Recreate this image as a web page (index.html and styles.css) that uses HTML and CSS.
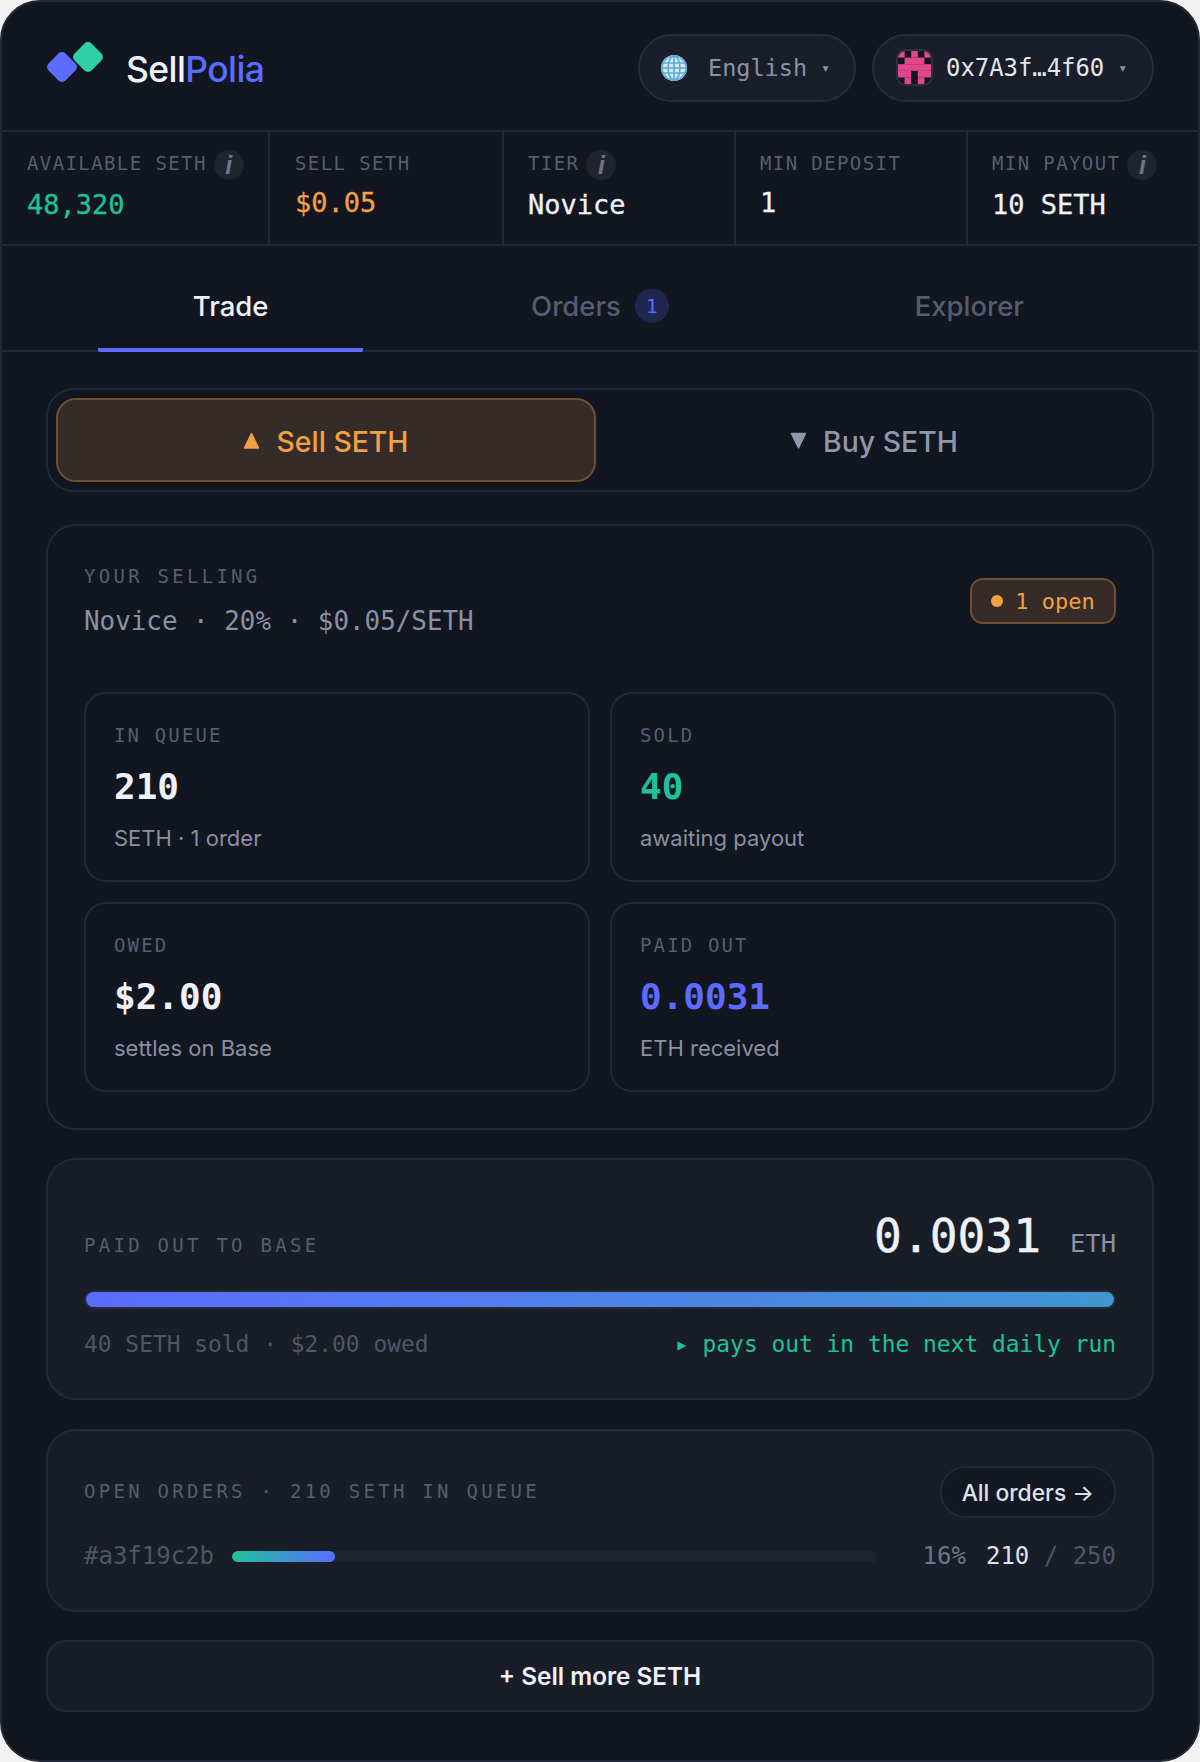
FILE: index.html
```html
<!DOCTYPE html>
<html>
<head>
    <title>SellPolia</title>
    <link rel="stylesheet" href="styles.css">
</head>
<body>
    <div class="shell">
        <header class="topbar">
            <div class="brand">
                <svg class="logo" width="60" height="44" viewBox="0 0 60 44">
                    <rect x="32" y="4" width="24" height="24" rx="5" fill="#30cfa5" transform="rotate(45 44 16)"/>
                    <rect x="6" y="14" width="24" height="24" rx="5" fill="#5b6cff" transform="rotate(45 18 26)"/>
                </svg>
                <span class="brand-name">Sell<em>Polia</em></span>
            </div>
            <div class="top-actions">
                <div class="pill pill-lang">
                    <svg class="globe" width="26" height="26" viewBox="0 0 26 26">
                        <circle cx="13" cy="13" r="13" fill="#dfe3e6"/>
                        <g fill="none" stroke="#52b0d8" stroke-width="1.7">
                            <circle cx="13" cy="13" r="12"/>
                            <ellipse cx="13" cy="13" rx="6" ry="12"/>
                            <path d="M13 1v24M2 8h22M1 13h24M2 18h22"/>
                        </g>
                    </svg>
                    <span class="lang">English</span>
                    <span class="caret">▾</span>
                </div>
                <div class="pill pill-wallet">
                    <svg class="identicon" width="37" height="37" viewBox="0 0 37 37">
                        <clipPath id="idclip"><rect x="2" y="2" width="33" height="33" rx="8"/></clipPath>
                        <rect x="1" y="1" width="35" height="35" rx="9" fill="#121620" stroke="#2a3040" stroke-width="2"/>
                        <g fill="#e2468c" clip-path="url(#idclip)">
                            <rect x="2" y="2" width="6.6" height="6.6"/>
                            <rect x="15.2" y="2" width="6.6" height="6.6"/>
                            <rect x="28.4" y="2" width="6.6" height="6.6"/>
                            <rect x="8.6" y="8.6" width="19.8" height="6.6"/>
                            <rect x="2" y="15.2" width="33" height="6.6"/>
                            <rect x="2" y="21.8" width="13.2" height="6.6"/>
                            <rect x="21.8" y="21.8" width="13.2" height="6.6"/>
                            <rect x="8.6" y="28.4" width="6.6" height="6.6"/>
                            <rect x="21.8" y="28.4" width="6.6" height="6.6"/>
                        </g>
                    </svg>
                    <span class="address">0x7A3f…4f60</span>
                    <span class="caret">▾</span>
                </div>
            </div>
        </header>

        <section class="stats">
            <div class="stat">
                <div class="stat-label">AVAILABLE SETH<i class="info">i</i></div>
                <div class="stat-value green">48,320</div>
            </div>
            <div class="stat">
                <div class="stat-label">SELL SETH</div>
                <div class="stat-value orange">$0.05</div>
            </div>
            <div class="stat">
                <div class="stat-label">TIER<i class="info">i</i></div>
                <div class="stat-value">Novice</div>
            </div>
            <div class="stat">
                <div class="stat-label">MIN DEPOSIT</div>
                <div class="stat-value">1</div>
            </div>
            <div class="stat">
                <div class="stat-label">MIN PAYOUT<i class="info">i</i></div>
                <div class="stat-value">10 SETH</div>
            </div>
        </section>

        <nav class="tabs">
            <div class="tab active">Trade</div>
            <div class="tab">Orders<span class="tab-count">1</span></div>
            <div class="tab">Explorer</div>
        </nav>

        <main class="content">
            <div class="toggle">
                <div class="toggle-btn sell">
                    <svg width="17" height="18" viewBox="0 0 17 18"><path d="M8.5 1.5 L15.5 16 H1.5 Z" fill="#f2a044" stroke="#f2a044" stroke-width="1.5" stroke-linejoin="round"/></svg>
                    Sell SETH
                </div>
                <div class="toggle-btn buy">
                    <svg width="17" height="18" viewBox="0 0 17 18"><path d="M1.5 1.5 H15.5 L8.5 16 Z" fill="#8f98ab" stroke="#8f98ab" stroke-width="1.5" stroke-linejoin="round"/></svg>
                    Buy SETH
                </div>
            </div>

            <section class="card selling">
                <div class="selling-head">
                    <div class="selling-title">
                        <div class="label">YOUR SELLING</div>
                        <div class="selling-sub">Novice · 20% · $0.05/SETH</div>
                    </div>
                    <div class="badge"><span class="dot"></span>1 open</div>
                </div>
                <div class="tiles">
                    <div class="tile">
                        <div class="tile-label">IN QUEUE</div>
                        <div class="tile-value">210</div>
                        <div class="tile-sub">SETH · 1 order</div>
                    </div>
                    <div class="tile">
                        <div class="tile-label">SOLD</div>
                        <div class="tile-value green">40</div>
                        <div class="tile-sub">awaiting payout</div>
                    </div>
                    <div class="tile">
                        <div class="tile-label">OWED</div>
                        <div class="tile-value">$2.00</div>
                        <div class="tile-sub">settles on Base</div>
                    </div>
                    <div class="tile">
                        <div class="tile-label">PAID OUT</div>
                        <div class="tile-value indigo">0.0031</div>
                        <div class="tile-sub">ETH received</div>
                    </div>
                </div>
            </section>

            <section class="card raised payout">
                <div class="payout-head">
                    <div class="label">PAID OUT TO BASE</div>
                    <div class="payout-amount">0.0031<span class="unit">ETH</span></div>
                </div>
                <div class="payout-track"><div class="payout-fill"></div></div>
                <div class="payout-foot">
                    <span>40 SETH sold · $2.00 owed</span>
                    <span class="green">▸ pays out in the next daily run</span>
                </div>
            </section>

            <section class="card raised orders">
                <div class="orders-head">
                    <div class="label">OPEN ORDERS · 210 SETH IN QUEUE</div>
                    <div class="all-orders">All orders →</div>
                </div>
                <div class="order-row">
                    <span class="order-id">#a3f19c2b</span>
                    <div class="order-track"><div class="order-fill" style="width: 16%"></div></div>
                    <span class="order-pct">16%</span>
                    <span class="order-amt"><b>210</b> / 250</span>
                </div>
            </section>

            <div class="sell-more">+ Sell more SETH</div>
        </main>
    </div>
</body>
</html>
```

FILE: styles.css
```css
* { box-sizing: border-box; }
html, body { margin: 0; padding: 0; }
body {
    background: #f2f2f2;
    font-family: Inter, sans-serif;
    color: #eef1f8;
}
.shell {
    width: 1200px;
    height: 1762px;
    border: 2px solid #232938;
    border-radius: 40px;
    background: #121620;
    overflow: hidden;
}
.green { color: #1fc29a; }
.orange { color: #f2a044; }
.indigo { color: #5b6cff; }

/* header */
.topbar {
    height: 128px;
    padding: 3px 44px 0 42px;
    display: flex;
    align-items: center;
    justify-content: space-between;
}
.brand { display: flex; align-items: center; gap: 22px; }
.logo { display: block; margin-top: -9px; }
.brand-name { font-size: 35.5px; font-weight: 500; letter-spacing: -0.6px; margin-top: 3px; }
.brand-name em { font-style: normal; color: #5b6cff; }
.top-actions { display: flex; gap: 16px; }
.pill {
    height: 68px;
    display: flex;
    align-items: center;
    border: 2px solid #272d3b;
    border-radius: 34px;
    background: #191e2a;
    font-family: "DejaVu Sans Mono", monospace;
}
.pill-lang { width: 218px; padding-left: 21px; }
.pill-wallet { width: 282px; padding-left: 22px; }
.lang { font-size: 23.5px; color: #8a92a6; margin-left: 21px; }
.address { font-size: 23.9px; color: #e2e6ee; margin-left: 13px; }
.caret { font-size: 15px; color: #8a92a6; margin-left: 14px; }

/* stats strip */
.stats {
    display: grid;
    grid-template-columns: 268px 234px 232px 232px 1fr;
    height: 116px;
    border-top: 2px solid #232938;
    border-bottom: 2px solid #232938;
    font-family: "DejaVu Sans Mono", monospace;
}
.stat { padding: 18px 0 0 24px; border-right: 2px solid #232938; }
.stat:nth-child(-n+2) { padding-left: 25px; }
.stat:last-child { border-right: 0; }
.stat-label {
    display: flex;
    align-items: flex-start;
    min-height: 28px;
    font-size: 19px;
    line-height: 27px;
    letter-spacing: 1.4px;
    color: #565e70;
}
.info {
    width: 30px;
    height: 30px;
    margin-left: 7px;
    border-radius: 50%;
    background: #1f2430;
    color: #6f7688;
    font-family: "Liberation Sans", sans-serif;
    font-size: 25px;
    font-weight: 700;
    line-height: 30px;
    letter-spacing: 0;
    text-align: center;
}
.stat-value { margin-top: 7px; font-size: 27px; line-height: 36px; color: #eef1f8; -webkit-text-stroke: 0.3px; }
.stat-value.green { color: #1fc29a; }
.stat-value.orange { color: #f2a044; }

/* tabs */
.tabs {
    display: grid;
    grid-template-columns: repeat(3, 1fr);
    height: 106px;
    padding: 0 44px;
    border-bottom: 2px solid #232938;
}
.tab {
    margin: 0 52px -2px;
    padding-top: 18px;
    display: flex;
    align-items: center;
    justify-content: center;
    font-size: 27.5px;
    font-weight: 500;
    color: #565d70;
    border-bottom: 4px solid transparent;
    border-radius: 0 0 2px 2px;
}
.tab.active { color: #eef1f8; border-bottom-color: #5b6cff; }
.tab-count {
    width: 34px;
    height: 34px;
    margin-left: 14px;
    border-radius: 50%;
    background: #1f2650;
    color: #5b6cff;
    font-family: "DejaVu Sans Mono", monospace;
    font-size: 20px;
    font-weight: 400;
    line-height: 34px;
    text-align: center;
}

/* main column */
.content { padding: 36px 44px 0; }
.toggle {
    display: grid;
    grid-template-columns: 1fr 1fr;
    gap: 8px;
    height: 104px;
    padding: 8px;
    border: 2px solid #232938;
    border-radius: 28px;
}
.toggle-btn {
    display: flex;
    align-items: center;
    justify-content: center;
    gap: 16px;
    padding-top: 2px;
    border: 2px solid transparent;
    border-radius: 20px;
    font-size: 28.4px;
    font-weight: 500;
}
.toggle-btn.sell { background: #352b28; border-color: #6f4f2e; color: #f2a044; }
.toggle-btn.buy { color: #8f98ab; }

.card { border: 2px solid #232938; border-radius: 30px; }
.raised { background: #181d28; }
.label {
    font-family: "DejaVu Sans Mono", monospace;
    font-size: 19px;
    line-height: 28px;
    letter-spacing: 3.27px;
    color: #565e70;
}

/* your selling */
.selling { margin-top: 32px; height: 606px; padding: 36px 36px 0; }
.selling-head { display: flex; justify-content: space-between; align-items: center; height: 78px; }
.selling-title { align-self: flex-start; }
.selling-sub { margin-top: 15px; font-family: "DejaVu Sans Mono", monospace; font-size: 25.9px; line-height: 32px; color: #8a92a6; }
.badge {
    height: 46px;
    width: 146px;
    display: flex;
    align-items: center;
    justify-content: center;
    gap: 12px;
    border: 2px solid #6f4f2e;
    border-radius: 13px;
    background: #352b28;
    font-family: "DejaVu Sans Mono", monospace;
    font-size: 22px;
    color: #f2a044;
}
.dot { width: 12px; height: 12px; border-radius: 50%; background: #f2a044; }
.tiles { display: grid; grid-template-columns: 1fr 1fr; gap: 20px; margin-top: 52px; }
.tile { height: 190px; padding: 29px 28px 0; border: 2px solid #232938; border-radius: 22px; }
.tile-label { font-family: "DejaVu Sans Mono", monospace; font-size: 19px; letter-spacing: 2.15px; line-height: 24px; color: #565e70; }
.tile-value { margin-top: 18px; font-family: "DejaVu Sans Mono", monospace; font-size: 36px; font-weight: 700; line-height: 44px; color: #eef1f8; }
.tile-value.green { color: #1fc29a; }
.tile-value.indigo { color: #5b6cff; }
.tile-sub { margin-top: 15px; font-size: 22px; line-height: 28px; color: #8a90a0; }

/* payout */
.payout { margin-top: 28px; height: 242px; padding: 0 36px; }
.payout-head { display: flex; justify-content: space-between; align-items: baseline; height: 130px; padding-top: 49px; }
.payout-amount { font-family: "DejaVu Sans Mono", monospace; font-size: 46.2px; color: #eef1f8; -webkit-text-stroke: 0.4px; }
.unit { margin-left: 29px; font-size: 25.5px; color: #8a92a6; -webkit-text-stroke: 0; }
.payout-track { height: 19px; border: 2px solid #232938; border-radius: 10px; }
.payout-fill { height: 100%; border-radius: 8px; background: linear-gradient(90deg, #5b6cff, #4096d0); }
.payout-foot {
    display: flex;
    justify-content: space-between;
    margin-top: 22px;
    font-family: "DejaVu Sans Mono", monospace;
    font-size: 22.9px;
    color: #4f5668;
}

/* open orders */
.orders { margin-top: 29px; height: 183px; padding: 35px 36px 0; }
.orders-head { display: flex; justify-content: space-between; align-items: center; }
.orders-head .label { padding-bottom: 2px; }
.all-orders {
    height: 52px;
    padding: 0 20px;
    display: flex;
    align-items: center;
    border: 2px solid #232938;
    border-radius: 26px;
    background: #141823;
    font-size: 22.8px;
    font-weight: 500;
    color: #dde1ea;
}
.order-row {
    display: flex;
    align-items: center;
    margin-top: 24px;
    font-family: "DejaVu Sans Mono", monospace;
    font-size: 24px;
    line-height: 28px;
    color: #4f5668;
}
.order-track { flex: 1; height: 11px; margin: 0 46px 0 18px; border-radius: 6px; background: #1f2430; overflow: hidden; }
.order-fill { height: 100%; border-radius: 6px; background: linear-gradient(90deg, #1fc29a, #5b6cff); }
.order-pct { color: #6f7688; margin-right: 20px; }
.order-amt b { font-weight: 400; color: #dde1ea; }

.sell-more {
    margin-top: 28px;
    height: 72px;
    display: flex;
    align-items: center;
    justify-content: center;
    border: 2px solid #232938;
    border-radius: 20px;
    background: #181d28;
    font-size: 24.3px;
    font-weight: 600;
    color: #eef1f8;
}
```
